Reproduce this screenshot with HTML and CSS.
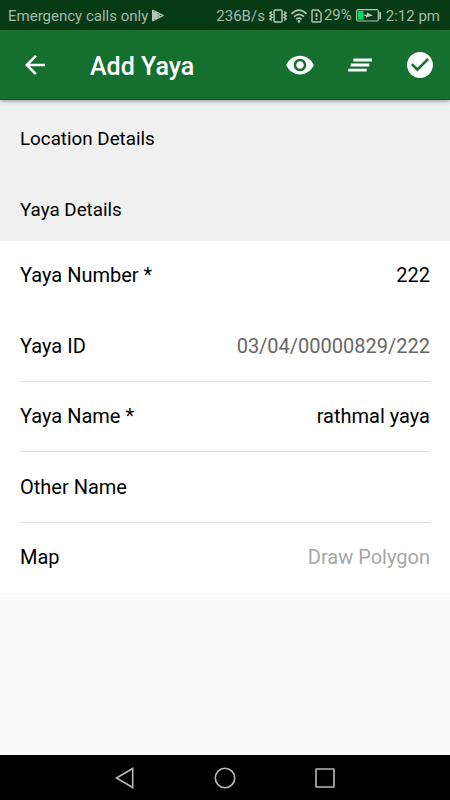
FILE: index.html
```html
<!DOCTYPE html>
<html lang="en">
<head>
    <meta charset="UTF-8">
    <meta name="viewport" content="width=device-width, initial-scale=1.0">
    <title>Add Yaya</title>
    <link rel="stylesheet" href="styles.css">
</head>
<body>

    <div class="status-bar">
        <span class="carrier">Emergency calls only</span>
        <svg class="play" width="13" height="13" viewBox="0 0 13 13">
            <path d="M1 .5v12l6-6z" fill="#b5c5b9"/>
            <path d="M1.500 1l10.500 5.500-10.500 5.500M4 3l5 5M4 10l5-5" fill="none" stroke="#b5c5b9" stroke-width="1.300"/>
        </svg>
        <span class="speed">236B/s</span>
        <svg class="vibrate" width="18" height="14" viewBox="0 0 18 14" fill="none" stroke="#b5c5b9" stroke-width="1.500">
            <rect x="5" y="1" width="8" height="12" rx="1"/>
            <path d="M2.800 2.500L1 4l2 1.500-2 1.500 2 1.500L1 10l1.800 1.500M15.200 2.500L17 4l-2 1.500 2 1.500-2 1.500 2 1.500-1.800 1.500"/>
        </svg>
        <svg class="wifi" width="16" height="14" viewBox="0 0 16 14" fill="none" stroke="#b5c5b9" stroke-width="1.700">
            <path d="M.5 4.800Q8-2.500 15.500 4.800M3 7.700q5-4.600 10 0M5.400 10.300q2.600-2.300 5.200 0"/>
            <circle cx="8" cy="12.400" r="1.300" fill="#b5c5b9" stroke="none"/>
        </svg>
        <svg class="sim" width="11" height="14" viewBox="0 0 11 14" fill="none" stroke="#b5c5b9" stroke-width="1.400">
            <path d="M1.500 1h5.500l3 3v8q0 1-1 1h-7q-1 0-1-1V2q0-1 .5-1z"/>
            <path d="M5.500 4v4M5.500 9.300v1.700" stroke-width="1.700"/>
        </svg>
        <span class="percent">29%</span>
        <svg class="battery" width="26" height="13" viewBox="0 0 26 13">
            <rect x=".7" y=".7" width="21.600" height="11.300" rx="1.500" fill="none" stroke="#b5c5b9" stroke-width="1.200"/>
            <path d="M2 2h5.500v8.700H2z" fill="#00dc5a"/>
            <path d="M23.300 3H25v7h-1.700z" fill="#b5c5b9"/>
            <path d="M6 5.800l5-.2V3.500l6 3-6 1.400-1 1.800V7.300z" fill="#b5c5b9"/>
        </svg>
        <span class="time">2:12 pm</span>
    </div>

    <header>
        <svg class="back" width="30" height="30" viewBox="0 0 24 24" fill="#fff">
            <path d="M20 11H7.830l5.590-5.590L12 4l-8 8 8 8 1.410-1.410L7.830 13H20v-2z"/>
        </svg>
        <h1>Add Yaya</h1>
        <div class="actions">
            <svg width="30" height="30" viewBox="0 0 24 24" fill="#fff">
                <path d="M12 4.500C7 4.500 2.730 7.610 1 12c1.730 4.390 6 7.500 11 7.500s9.270-3.110 11-7.500c-1.730-4.390-6-7.500-11-7.500zM12 17c-2.760 0-5-2.240-5-5s2.240-5 5-5 5 2.240 5 5-2.240 5-5 5zm0-8c-1.660 0-3 1.340-3 3s1.340 3 3 3 3-1.340 3-3-1.340-3-3-3z"/>
            </svg>
            <svg width="30" height="30" viewBox="0 0 24 24" fill="#fff">
                <path d="M6.700 6.800h14.800v2.300H6.700zM4.600 10.800h14.800v2.400H4.600zM2.500 14.900h14.800v2.300H2.500z"/>
            </svg>
            <svg width="30" height="30" viewBox="0.4 0.4 23.2 23.2" fill="#fff">
                <path d="M12 2C6.480 2 2 6.480 2 12s4.480 10 10 10 10-4.480 10-10S17.520 2 12 2zm-2 15l-5-5 1.410-1.410L10 14.170l7.590-7.590L19 8l-9 9z"/>
            </svg>
        </div>
    </header>

    <main>
        <h2>Location Details</h2>
        <h2>Yaya Details</h2>
        <div class="form">
            <div class="row no-line">
                <span>Yaya Number *</span>
                <span class="value">222</span>
            </div>
            <div class="row">
                <span>Yaya ID</span>
                <span class="value readonly">03/04/00000829/222</span>
            </div>
            <div class="row">
                <span>Yaya Name *</span>
                <span class="value">rathmal yaya</span>
            </div>
            <div class="row">
                <span>Other Name</span>
            </div>
            <div class="row no-line">
                <span>Map</span>
                <span class="value hint">Draw Polygon</span>
            </div>
        </div>
    </main>

    <footer>
        <svg width="22" height="24" viewBox="0 0 22 24"><path d="M2.500 12L18.700 2.500v19z"/></svg>
        <svg width="22" height="24" viewBox="0 0 22 24"><circle cx="11" cy="12" r="9.700"/></svg>
        <svg width="22" height="24" viewBox="0 0 22 24"><rect x="2" y="3" width="18" height="18" rx=".5"/></svg>
    </footer>

</body>
</html>
```
FILE: styles.css
```css
* {
    box-sizing: border-box;
}

body {
    font-family: Roboto, "Liberation Sans", sans-serif;
    margin: 0;
    height: 800px;
    display: flex;
    flex-direction: column;
    background-color: #fafafa;
    color: #000;
    overflow: hidden;
}

svg {
    display: block;
    flex-shrink: 0;
}

.status-bar {
    height: 30px;
    padding: 1px 10px 0 8px;
    display: flex;
    align-items: center;
    background-color: #073b16;
    color: #a5b8aa;
    font-size: 15px;
    white-space: nowrap;
}

.play {
    margin-left: 3px;
}

.speed {
    margin-left: auto;
}

.vibrate {
    margin-left: 4px;
}

.wifi {
    margin-left: 4px;
}

.sim {
    margin-left: 4px;
}

.percent {
    margin: 0 0 2px 2px;
}

.battery {
    margin-left: 4px;
}

.time {
    margin-left: 4px;
}

header {
    height: 70px;
    padding: 0 15px 0 20px;
    display: flex;
    align-items: center;
    background-color: #157030;
    border-bottom: 1px solid #086020;
    color: white;
    box-shadow: 0 1px 4px rgba(0, 0, 0, 0.4);
    z-index: 1;
}

h1 {
    margin: 4px 0 0 40px;
    font-size: 25px;
    font-weight: 500;
}

.actions {
    margin-left: auto;
    display: flex;
    align-items: center;
    gap: 30px;
}

main {
    flex: 1;
}

h2 {
    height: 70.5px;
    margin: 0;
    padding: 7.5px 20px 0;
    display: flex;
    align-items: center;
    background-color: #f0f0f0;
    font-size: 18.8px;
    font-weight: 400;
}

.form {
    padding: 0 20px;
    background-color: white;
}

.row {
    height: 70.45px;
    padding-bottom: 1px;
    display: flex;
    align-items: center;
    justify-content: space-between;
    border-bottom: 1px solid #e0e0e0;
    font-size: 20px;
}

.no-line {
    border-bottom-color: transparent;
}

.readonly {
    color: #666;
}

.hint {
    color: #a6a6a6;
}

footer {
    height: 45px;
    padding: 0 114px;
    display: flex;
    align-items: center;
    justify-content: space-between;
    background-color: #000;
}

footer svg {
    fill: none;
    stroke: #b8b8b8;
    stroke-width: 1.6;
}
```
